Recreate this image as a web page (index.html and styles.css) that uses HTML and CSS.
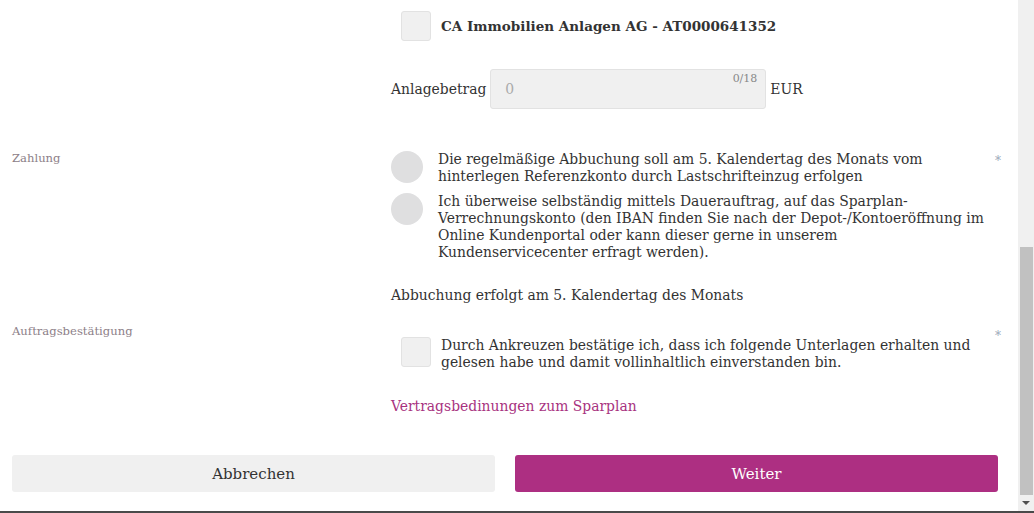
FILE: index.html
```html
<!DOCTYPE html>
<html lang="de">
<head>
  <meta charset="UTF-8" />
  <title>Sparplan</title>
  <meta name="viewport" content="width=device-width, initial-scale=1.0"/>
  <link rel="stylesheet" href="styles.css">
</head>
<body>
  <div class="window">
    <main class="form">

      <div class="row product">
        <div class="label"></div>
        <div class="field">
          <label class="check">
            <span class="box"></span>
            <span class="product-name">CA Immobilien Anlagen AG - AT0000641352</span>
          </label>
        </div>
        <div class="star"></div>
      </div>

      <div class="row amount">
        <div class="label"></div>
        <div class="field amount-line">
          <span>Anlagebetrag</span>
          <div class="input">
            <span class="placeholder">0</span>
            <span class="counter">0/18</span>
          </div>
          <span>EUR</span>
        </div>
        <div class="star"></div>
      </div>

      <div class="row payment">
        <div class="label">Zahlung</div>
        <div class="field">
          <label class="radio">
            <span class="dot"></span>
            <span>Die regelmäßige Abbuchung soll am 5. Kalendertag des Monats vom hinterlegen Referenzkonto durch Lastschrifteinzug erfolgen</span>
          </label>
          <label class="radio">
            <span class="dot"></span>
            <span>Ich überweise selbständig mittels Dauerauftrag, auf das Sparplan-Verrechnungskonto (den IBAN finden Sie nach der Depot-/Kontoeröffnung im Online Kundenportal oder kann dieser gerne in unserem Kundenservicecenter erfragt werden).</span>
          </label>
          <p class="note">Abbuchung erfolgt am 5. Kalendertag des Monats</p>
        </div>
        <div class="star">*</div>
      </div>

      <div class="row confirm">
        <div class="label">Auftragsbestätigung</div>
        <div class="field">
          <label class="check">
            <span class="box"></span>
            <span>Durch Ankreuzen bestätige ich, dass ich folgende Unterlagen erhalten und gelesen habe und damit vollinhaltlich einverstanden bin.</span>
          </label>
          <a class="doc-link" href="#">Vertragsbedinungen zum Sparplan</a>
        </div>
        <div class="star">*</div>
      </div>

      <div class="actions">
        <button class="btn cancel">Abbrechen</button>
        <button class="btn next">Weiter</button>
      </div>

    </main>
    <div class="scrollbar">
      <div class="track">
        <div class="thumb"></div>
      </div>
      <div class="arrow"></div>
    </div>
  </div>
</body>
</html>
```

FILE: styles.css
```css
body {
  margin: 0;
  font-family: 'DejaVu Serif', 'Liberation Serif', serif;
  font-size: 13.9px;
  color: #333;
  background: white;
}

.window {
  display: flex;
  height: 511px;
  border-bottom: 2px solid #4a4a4a;
  overflow: hidden;
}

.form {
  flex: 1;
  padding: 0 12px;
}

.row {
  display: grid;
  grid-template-columns: 379px 1fr 16px;
}

.label {
  font-size: 11.6px;
  color: #8d8088;
}

.star {
  color: #9aa8b8;
  font-size: 12px;
  text-align: center;
  padding-top: 3px;
}

.confirm .star {
  padding-top: 5px;
}

/* checkbox rows */
.check {
  display: flex;
  align-items: flex-start;
  gap: 10px;
  margin-left: 10px;
  line-height: 17px;
}

.box {
  flex: none;
  width: 28px;
  height: 28px;
  background: #f0f0f0;
  border: 1px solid #e2e2e2;
  border-radius: 3px;
}

.product {
  padding-top: 11px;
}

.product .check {
  align-items: center;
}

.product-name {
  font-weight: bold;
  font-size: 13.5px;
}

/* amount */
.amount {
  padding-top: 28px;
}

.amount-line {
  display: flex;
  align-items: center;
  gap: 4px;
}

.input {
  position: relative;
  display: flex;
  align-items: center;
  box-sizing: border-box;
  width: 276px;
  height: 40px;
  padding-left: 14px;
  background: #f0f0f0;
  border: 1px solid #e2e2e2;
  border-radius: 3px;
}

.placeholder {
  color: #aaa;
}

.counter {
  position: absolute;
  top: 2px;
  right: 8px;
  font-size: 11px;
  color: #888;
}

/* payment */
.payment {
  padding-top: 42px;
}

.radio {
  display: flex;
  align-items: flex-start;
  gap: 15px;
  line-height: 17px;
  margin-bottom: 8px;
}

.dot {
  flex: none;
  width: 32px;
  height: 32px;
  border-radius: 50%;
  background: #dfdfe0;
}

.note {
  margin: 26px 0 0;
}

/* confirmation */
.confirm {
  padding-top: 21px;
}

.confirm .check {
  margin-top: 13px;
}

.doc-link {
  display: block;
  margin-top: 27px;
  color: #a8337f;
  text-decoration: none;
}

/* buttons */
.actions {
  display: flex;
  gap: 20px;
  margin-top: 41px;
  padding-right: 8px;
}

.btn {
  flex: 1;
  height: 37px;
  border: none;
  border-radius: 3px;
  font-family: inherit;
  font-size: 15px;
  cursor: pointer;
}

.cancel {
  background: #f0f0f0;
  color: #333;
}

.next {
  background: #ad2f82;
  color: white;
}

/* fake window scrollbar */
.scrollbar {
  width: 16px;
  background: #f0f0f0;
  display: flex;
  flex-direction: column;
}

.track {
  flex: 1;
  padding: 247px 1px 0 2px;
}

.thumb {
  height: 248px;
  background: #c1c1c1;
}

.arrow {
  height: 16px;
  display: flex;
  justify-content: center;
  align-items: center;
}

.arrow::after {
  content: '';
  border-left: 4px solid transparent;
  border-right: 4px solid transparent;
  border-top: 4px solid #505050;
}
```
